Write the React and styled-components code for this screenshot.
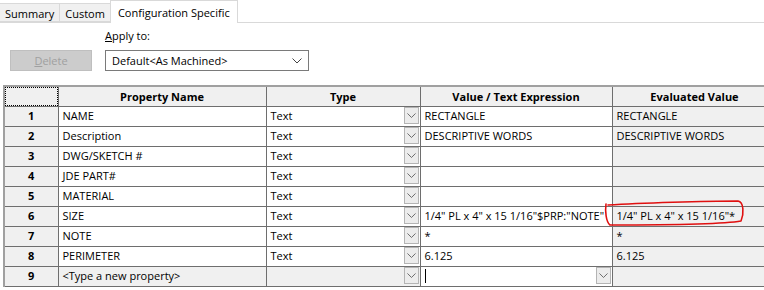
import styled, { createGlobalStyle } from "styled-components";

const GlobalStyle = createGlobalStyle`
  html, body { margin: 0; padding: 0; background: #ffffff; overflow: hidden; }
  body { font-family: "Open Sans", "Noto Sans", "Liberation Sans", sans-serif; font-size: 11px; color: #000; }
`;

const Page = styled.div`
  position: relative;
  width: 764px;
  height: 290px;
  overflow: hidden;
`;

const TabBar = styled.div`
  display: flex;
  align-items: flex-end;
  height: 23px;
  border-bottom: 1px solid #d9d9d9;
  box-sizing: border-box;
`;

const Tab = styled.div`
  box-sizing: border-box;
  height: ${(p) => (p.$active ? "23px" : "19px")};
  margin-bottom: ${(p) => (p.$active ? "-1px" : "0")};
  padding: 0 ${(p) => (p.$active ? "7px" : "5px")};
  display: flex;
  align-items: center;
  padding-top: ${(p) => (p.$active ? "0" : "1px")};
  background: ${(p) => (p.$active ? "#ffffff" : "#f0f0f0")};
  border: 1px solid #d9d9d9;
  border-bottom: ${(p) => (p.$active ? "none" : "1px solid #d9d9d9")};
  border-left: ${(p) => (p.$first ? "none" : "1px solid #d9d9d9")};
  margin-left: ${(p) => (p.$first ? "0" : "-1px")};
  white-space: nowrap;
`;

const Controls = styled.div`
  display: flex;
  align-items: flex-start;
  gap: 13px;
  padding: 5px 0 0 10px;
  height: 62px;
  box-sizing: border-box;
`;

const DeleteButton = styled.div`
  width: 82px;
  height: 21px;
  box-sizing: border-box;
  background: #cccccc;
  border: 1px solid #bfbfbf;
  color: #a0a0a0;
  display: flex;
  align-items: center;
  justify-content: center;
  margin-top: 22px;
  u { text-decoration: underline; }
`;

const ApplyGroup = styled.div`
  display: flex;
  flex-direction: column;
  gap: 6px;
`;

const Label = styled.div`
  line-height: 16px;
  u { text-decoration: underline; }
`;

const Combo = styled.div`
  width: 204px;
  height: 21px;
  box-sizing: border-box;
  border: 1px solid #7a7a7a;
  background: #fff;
  display: flex;
  align-items: center;
  justify-content: space-between;
  padding: 0 6px 0 6px;
`;

const Grid = styled.table`
  margin-left: 3px;
  border-collapse: collapse;
  table-layout: fixed;
  width: 773px;
  border-left: 2px solid #a0a0a0;
  border-top: 2px solid #a0a0a0;
`;

const HeadCell = styled.th`
  height: 20px;
  padding: 0;
  background: #f0f0f0;
  border: 1px solid #6e6e6e;
  font-weight: 700;
  text-align: center;
  box-sizing: border-box;
`;

const Corner = styled.th`
  height: 20px;
  padding: 0;
  background: #f0f0f0;
  border: 1px solid #6e6e6e;
  box-sizing: border-box;
  position: relative;
  &::after {
    content: "";
    position: absolute;
    inset: 0;
    border: 1px dotted #000;
  }
`;

const RowHead = styled.td`
  height: 20px;
  padding: 0 0 1px;
  background: #f0f0f0;
  border: 1px solid #6e6e6e;
  box-sizing: border-box;
  font-weight: 700;
  text-align: center;
`;

const Cell = styled.td`
  height: 20px;
  padding: 0 4px 1px;
  box-sizing: border-box;
  background: ${(p) => (p.$gray ? "#f0f0f0" : "#ffffff")};
  border: 1px solid #6e6e6e;
  white-space: nowrap;
  overflow: hidden;
`;

const CellInner = styled.div`
  display: flex;
  align-items: center;
  justify-content: space-between;
  height: 18px;
`;

const DropButton = styled.div`
  width: 15px;
  height: 17px;
  box-sizing: border-box;
  border: 1px solid #b4b4b4;
  background: #ececec;
  display: flex;
  align-items: center;
  justify-content: center;
  margin-right: -3px;
  flex: none;
`;

const Caret = styled.div`
  width: 1px;
  height: 14px;
  background: #000;
`;

const Annotation = styled.svg`
  position: absolute;
  left: 600px;
  top: 198px;
  overflow: visible;
`;

const Chevron = ({ size = 9, color = "#606060" }) => (
  <svg width={size} height={size * 0.6} viewBox="0 0 10 6">
    <path d="M0.5 0.5 L5 5 L9.5 0.5" fill="none" stroke={color} strokeWidth="1" />
  </svg>
);

const rows = [
  { name: "NAME", type: "Text", value: "RECTANGLE", evaluated: "RECTANGLE" },
  { name: "Description", type: "Text", value: "DESCRIPTIVE WORDS", evaluated: "DESCRIPTIVE WORDS" },
  { name: "DWG/SKETCH #", type: "Text", value: "", evaluated: "" },
  { name: "JDE PART#", type: "Text", value: "", evaluated: "" },
  { name: "MATERIAL", type: "Text", value: "", evaluated: "" },
  { name: "SIZE", type: "Text", value: '1/4" PL x 4" x 15 1/16"$PRP:"NOTE"', evaluated: '1/4" PL x 4" x 15 1/16"*' },
  { name: "NOTE", type: "Text", value: "*", evaluated: "*" },
  { name: "PERIMETER", type: "Text", value: "6.125", evaluated: "6.125" },
];

export default function App() {
  return (
    <Page>
      <GlobalStyle />
      <TabBar>
        <Tab $first>Summary</Tab>
        <Tab>Custom</Tab>
        <Tab $active>Configuration Specific</Tab>
      </TabBar>
      <Controls>
        <DeleteButton>
          <span><u>D</u>elete</span>
        </DeleteButton>
        <ApplyGroup>
          <Label><u>A</u>pply to:</Label>
          <Combo>
            <span>Default&lt;As Machined&gt;</span>
            <Chevron size={10} color="#444" />
          </Combo>
        </ApplyGroup>
      </Controls>
      <Grid>
        <colgroup>
          <col style={{ width: 54 }} />
          <col style={{ width: 208 }} />
          <col style={{ width: 154 }} />
          <col style={{ width: 192 }} />
          <col style={{ width: 165 }} />
        </colgroup>
        <thead>
          <tr>
            <Corner />
            <HeadCell>Property Name</HeadCell>
            <HeadCell>Type</HeadCell>
            <HeadCell>Value / Text Expression</HeadCell>
            <HeadCell>Evaluated Value</HeadCell>
          </tr>
        </thead>
        <tbody>
          {rows.map((r, i) => (
            <tr key={i}>
              <RowHead>{i + 1}</RowHead>
              <Cell>{r.name}</Cell>
              <Cell>
                <CellInner>
                  <span>{r.type}</span>
                  <DropButton><Chevron /></DropButton>
                </CellInner>
              </Cell>
              <Cell>{r.value}</Cell>
              <Cell $gray>{r.evaluated}</Cell>
            </tr>
          ))}
          <tr>
            <RowHead>9</RowHead>
            <Cell $gray>&lt;Type a new property&gt;</Cell>
            <Cell $gray>
              <CellInner>
                <span />
                <DropButton><Chevron /></DropButton>
              </CellInner>
            </Cell>
            <Cell>
              <CellInner>
                <Caret />
                <DropButton><Chevron /></DropButton>
              </CellInner>
            </Cell>
            <Cell $gray />
          </tr>
        </tbody>
      </Grid>
      <Annotation width="148" height="32" viewBox="0 0 148 32">
        <path
          d="M8 7 C40 5, 105 3, 138 3 C144 4, 144 16, 141 23 C125 26, 60 27, 10 27 C6 24, 5 13, 6 6"
          fill="none"
          stroke="#e01010"
          strokeWidth="1.6"
          strokeLinecap="round"
          strokeLinejoin="round"
        />
      </Annotation>
    </Page>
  );
}
